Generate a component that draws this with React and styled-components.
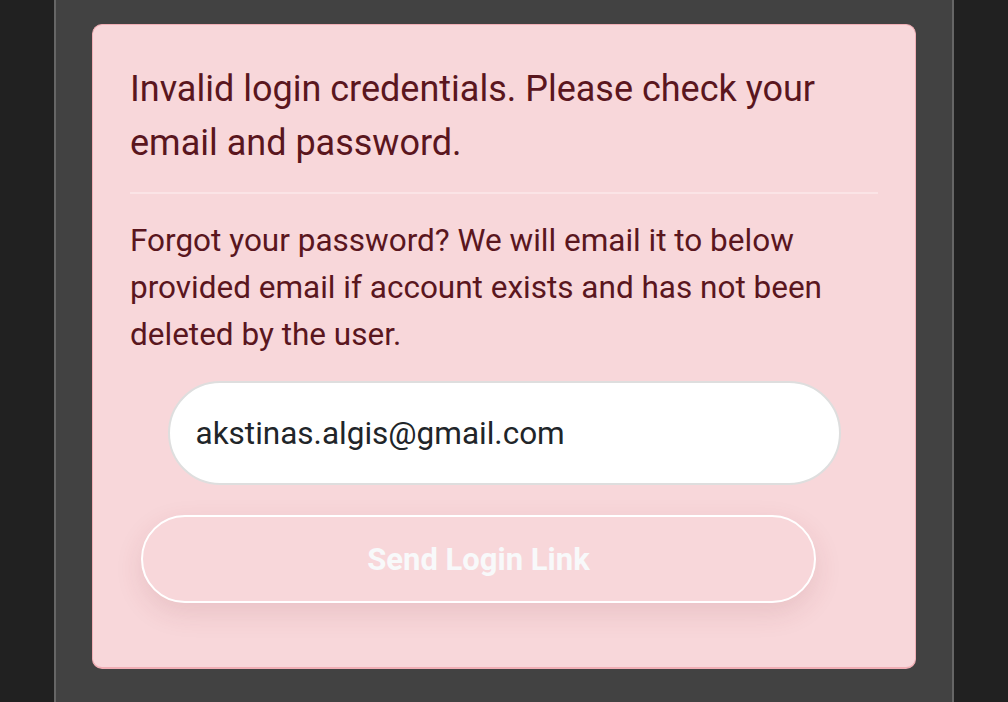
import React from 'react'
import styled, { createGlobalStyle } from 'styled-components'

const GlobalStyle = createGlobalStyle`
  html, body {
    margin: 0;
    height: 100%;
    background: #212121;
  }
  body {
    font-family: Roboto, 'Noto Sans', sans-serif;
  }
  #root {
    height: 100%;
  }
`

function App() {
  return (
    <>
      <GlobalStyle />
      <Page>
        <Panel>
          <Alert>
            <Heading>Invalid login credentials. Please check your email and password.</Heading>
            <Divider />
            <Message>
              Forgot your password? We will email it to below provided email if account exists and
              has not been deleted by the user.
            </Message>
            <EmailInput type='email' defaultValue='akstinas.algis@gmail.com' />
            <SendButton type='button' disabled>
              Send Login Link
            </SendButton>
          </Alert>
        </Panel>
      </Page>
    </>
  )
}

export default App

const Page = styled.div`
  display: flex;
  justify-content: center;
  height: 100%;
  overflow: hidden;
`
const Panel = styled.main`
  box-sizing: border-box;
  width: 900px;
  height: 100%;
  padding: 24px 36px 0;
  background: #424242;
  border-left: 2px solid #666666;
  border-right: 2px solid #666666;
`
const Alert = styled.section`
  box-sizing: border-box;
  display: flex;
  flex-direction: column;
  height: 645px;
  padding: 37px 37px 0;
  background: #f8d7da;
  border: 1px solid #f1aeb5;
  border-bottom-width: 2px;
  border-radius: 10px;
  color: #5a161e;
`
const Heading = styled.h4`
  margin: 0;
  font-size: 36px;
  font-weight: 400;
  line-height: 54px;
`
const Divider = styled.hr`
  width: 100%;
  margin: 22px 0 23px;
  border: 0;
  border-top: 2px solid #fbe4e6;
`
const Message = styled.p`
  margin: 0;
  font-size: 31.5px;
  line-height: 47px;
`
const EmailInput = styled.input`
  box-sizing: border-box;
  align-self: center;
  width: 673px;
  height: 104px;
  margin-top: 23px;
  padding: 0 26px;
  background: #ffffff;
  border: 2px solid #dedede;
  border-radius: 52px;
  font-family: Roboto, sans-serif;
  font-size: 31.5px;
  color: #212529;
  outline: none;
`
const SendButton = styled.button`
  box-sizing: border-box;
  align-self: flex-start;
  width: 675px;
  height: 88px;
  margin: 30px 0 0 11px;
  background: transparent;
  border: 2px solid #ffffff;
  border-radius: 44px;
  box-shadow: 0 10px 28px rgba(120, 40, 50, 0.12);
  font-family: Roboto, sans-serif;
  font-size: 31px;
  font-weight: 700;
  color: #f8f9fa;
`
